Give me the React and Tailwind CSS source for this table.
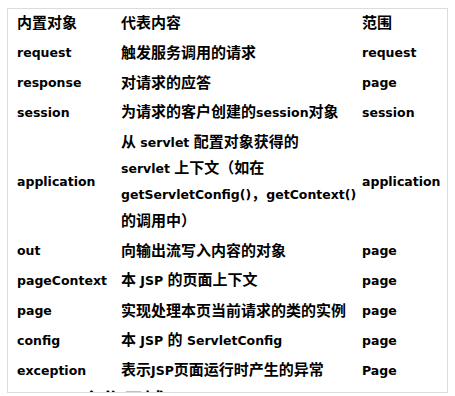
import React from 'react';

const rows = [
  { name: 'request', desc: ['触发服务调用的请求'], scope: 'request' },
  { name: 'response', desc: ['对请求的应答'], scope: 'page' },
  { name: 'session', desc: ['为请求的客户创建的session对象'], scope: 'session' },
  {
    name: 'application',
    desc: ['从 servlet 配置对象获得的', 'servlet 上下文（如在', 'getServletConfig()，getContext()', '的调用中）'],
    scope: 'application',
  },
  { name: 'out', desc: ['向输出流写入内容的对象'], scope: 'page' },
  { name: 'pageContext', desc: ['本 JSP 的页面上下文'], scope: 'page' },
  { name: 'page', desc: ['实现处理本页当前请求的类的实例'], scope: 'page' },
  { name: 'config', desc: ['本 JSP 的 ServletConfig'], scope: 'page' },
  { name: 'exception', desc: ['表示JSP页面运行时产生的异常'], scope: 'Page' },
];

// CJK runs get the bigger CJK font, latin runs the narrower sans
const Mixed = ({ text }) => {
  const parts = text.split(/([\u4e00-\u9fff\uff08\uff09\uff0c]+)/).filter(Boolean);
  return (
    <span className="whitespace-pre">
      {parts.map((p, i) =>
        /[\u4e00-\u9fff\uff08\uff09\uff0c]/.test(p) ? (
          <span key={i} className="text-[15px] font-['Noto_Sans_CJK_SC',sans-serif]">{p}</span>
        ) : (
          <span key={i} className="text-[12.5px] font-['DejaVu_Sans','Noto_Sans_CJK_SC',sans-serif]">{p}</span>
        )
      )}
    </span>
  );
};

const Line = ({ text }) => (
  <div className="h-[26px] flex items-center overflow-visible">
    <Mixed text={text} />
  </div>
);

const Row = ({ name, desc, scope }) => (
  <div className="grid grid-cols-[113px_241px_1fr] items-center py-[2px]">
    <div className="pl-[9px]"><Line text={name} /></div>
    <div className="flex flex-col">
      {desc.map((line, i) => (
        <Line key={i} text={line} />
      ))}
    </div>
    <div><Line text={scope} /></div>
  </div>
);

export default function App() {
  return (
    <div className="w-[455px] h-[396px] bg-white overflow-hidden pt-[8px] pl-[7px]">
      <div className="w-[441px] h-[385px] border border-[#dcdcdc] overflow-hidden font-bold text-black leading-[18px]">
        <div className="grid grid-cols-[113px_241px_1fr] items-center h-[28px] pb-[2px]">
          <div className="pl-[9px]"><Line text="内置对象" /></div>
          <div><Line text="代表内容" /></div>
          <div><Line text="范围" /></div>
        </div>
        {rows.map((r) => (
          <Row key={r.name} {...r} />
        ))}
        <div className="pl-[52px] pt-[3px] text-[20px] leading-[24px] tracking-[1px] font-['Noto_Sans_CJK_SC',sans-serif]">
          四个作用域
        </div>
      </div>
    </div>
  );
}
